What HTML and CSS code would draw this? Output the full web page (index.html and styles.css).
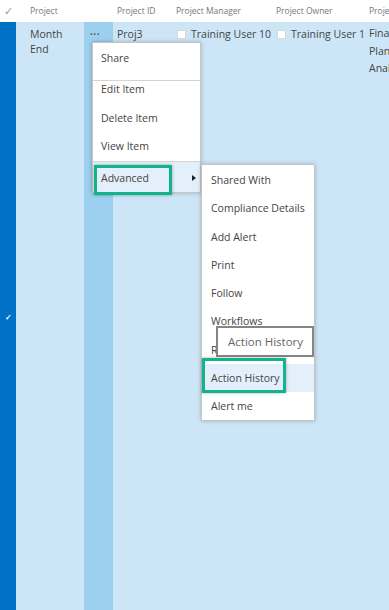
FILE: index.html
```html
<!DOCTYPE html>
<html lang="en">
<head>
    <meta charset="UTF-8">
    <meta name="viewport" content="width=device-width, initial-scale=1.0">
    <title>Projects - Action History</title>
    <link rel="stylesheet" href="styles.css">
</head>
<body>
    <!-- List view -->
    <div class="list">
        <div class="cell head check-head">&#10003;</div>
        <div class="cell head">Project</div>
        <div class="cell head"></div>
        <div class="cell head">Project ID</div>
        <div class="cell head">Project Manager</div>
        <div class="cell head">Project Owner</div>
        <div class="cell head">Project Type</div>

        <div class="cell select-cell"><span class="tick">&#10003;</span></div>
        <div class="cell">Month<br>End</div>
        <div class="cell dots-cell"><span class="dots">&middot;&middot;&middot;</span></div>
        <div class="cell">Proj3</div>
        <div class="cell"><span class="box"></span>Training User 10</div>
        <div class="cell"><span class="box"></span>Training User 1</div>
        <div class="cell type-cell">
            <p>Finance</p>
            <p>Planning</p>
            <p>Analysis</p>
        </div>
    </div>

    <!-- Item menu -->
    <div class="menu main-menu">
        <div class="section share-section">
            <div class="entry">Share</div>
        </div>
        <div class="section edit-section">
            <div class="entry">Edit Item</div>
            <div class="entry">Delete Item</div>
            <div class="entry">View Item</div>
        </div>
        <div class="section">
            <div class="entry advanced">Advanced<span class="arrow"></span></div>
        </div>
    </div>

    <!-- Advanced submenu -->
    <div class="menu sub-menu">
        <div class="sub-entry">Shared With</div>
        <div class="sub-entry">Compliance Details</div>
        <div class="sub-entry">Add Alert</div>
        <div class="sub-entry">Print</div>
        <div class="sub-entry">Follow</div>
        <div class="sub-entry">Workflows</div>
        <div class="sub-entry">Retention</div>
        <div class="sub-entry active">Action History</div>
        <div class="sub-entry">Alert me</div>
    </div>

    <div class="tooltip">Action History</div>

    <!-- Callout boxes -->
    <div class="mark mark-advanced"></div>
    <div class="mark mark-history"></div>
</body>
</html>
```

FILE: styles.css
```css
* {
    margin: 0;
    padding: 0;
    box-sizing: border-box;
}

body {
    height: 100vh;
    overflow: hidden;
    background-color: #cde6f7;
    font-family: "Open Sans", "Liberation Sans", sans-serif;
    color: #444;
    position: relative;
}

/* List grid */
.list {
    display: grid;
    grid-template-columns: 16px 68px 29px 59px 100px 93px 1fr;
    grid-template-rows: 22px 1fr;
    height: 100vh;
}

.cell {
    background-color: #cde6f7;
    font-size: 10.5px;
    line-height: 15px;
    padding: 5px 4px 0;
    white-space: nowrap;
    overflow: hidden;
}

.cell:nth-child(7n+2) {
    padding-left: 14px;
}

.head {
    background-color: #fff;
    color: #777;
    font-size: 8.5px;
    line-height: 22px;
    padding-top: 0;
}

.check-head {
    padding: 0 0 0 1px;
    text-align: center;
    color: #999;
    font-size: 10.5px;
}

.select-cell {
    background-color: #0072c6;
    display: flex;
    align-items: center;
    justify-content: center;
    padding: 0;
}

.tick {
    color: #fff;
    font-size: 8px;
    font-weight: bold;
}

.dots-cell {
    background-color: #9dcfee;
    padding-left: 6px;
}

.dots {
    font-size: 10px;
    font-weight: bold;
    letter-spacing: 0.5px;
    color: #555;
}

.box {
    display: inline-block;
    width: 9px;
    height: 9px;
    background-color: #fff;
    border: 1px solid #d8d8d8;
    margin: 0 5px 0 1px;
    vertical-align: -1px;
}

.type-cell p {
    line-height: 17.5px;
    margin-top: -2px;
}

.type-cell p + p {
    margin-top: 0;
}

/* Menus */
.menu {
    position: absolute;
    background-color: #fff;
    border: 1px solid #c6c6c6;
    box-shadow: 0 0 4px rgba(0, 0, 0, 0.25);
    font-size: 10.5px;
    color: #444;
    white-space: nowrap;
}

.main-menu {
    left: 92px;
    top: 42px;
    width: 109px;
}

.section + .section {
    border-top: 1px solid #d4d4d4;
}

.entry {
    line-height: 16px;
    padding: 0 8px;
}

.share-section {
    padding: 7px 0 14px;
}

.edit-section {
    padding: 0 0 7px;
}

.edit-section .entry + .entry {
    margin-top: 12.5px;
}

.advanced {
    position: relative;
    background-color: #e3effa;
    padding: 8px 8px 6px;
}

.arrow {
    position: absolute;
    right: 4px;
    top: 13px;
    border-left: 4px solid #222;
    border-top: 3px solid transparent;
    border-bottom: 3px solid transparent;
}

.sub-menu {
    left: 201px;
    top: 164px;
    width: 114px;
    padding-top: 1px;
}

.sub-entry {
    height: 28.25px;
    line-height: 28.25px;
    padding: 0 9px;
}

.sub-entry.active {
    background-color: #e3effa;
}

.tooltip {
    position: absolute;
    left: 216px;
    top: 326px;
    width: 98px;
    height: 31px;
    background-color: #fff;
    border: 2px solid #858585;
    color: #666;
    font-size: 11.5px;
    line-height: 27px;
    padding-left: 10px;
}

/* Highlight boxes */
.mark {
    position: absolute;
    border: 3px solid #13b38b;
    box-shadow: 0 0 3px rgba(0, 0, 0, 0.3);
}

.mark-advanced {
    left: 94px;
    top: 165px;
    width: 78px;
    height: 30px;
}

.mark-history {
    left: 202px;
    top: 358px;
    width: 84px;
    height: 35px;
}
```
